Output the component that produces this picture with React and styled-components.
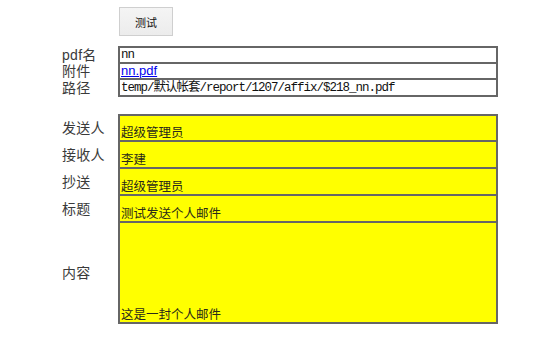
import React from "react";
import styled, { createGlobalStyle } from "styled-components";

const Global = createGlobalStyle`
  html, body { margin: 0; padding: 0; background: #fff; }
  body { font-family: "Noto Sans CJK SC", "Liberation Sans", sans-serif; }
`;

const Page = styled.div`
  display: grid;
  grid-template-columns: 56px 380px;
  padding: 7px 0 0 62px;
  align-items: stretch;
`;

const Spacer = styled.div`
  grid-column: 1 / -1;
  height: ${(p) => p.$h}px;
`;

const Button = styled.button`
  grid-column: 2;
  justify-self: start;
  margin-left: 1px;
  width: 54px;
  height: 29px;
  border: 1px solid #cfcfcf;
  background: linear-gradient(#f4f4f4, #ececec);
  color: #111;
  font-family: "Noto Sans CJK SC", sans-serif;
  font-size: 11px;
  font-weight: 400;
  padding: 0;
`;

const Label = styled.div`
  grid-column: 1;
  display: flex;
  align-items: center;
  font-family: "Liberation Sans", "Noto Sans CJK SC", sans-serif;
  font-size: 14px;
  color: #3a3a3a;
  line-height: 1;
  letter-spacing: 0.3px;
  white-space: nowrap;
`;

const Cell = styled.div`
  grid-column: 2;
  box-sizing: border-box;
  height: ${(p) => p.$h}px;
  border-style: solid;
  border-color: #666;
  border-width: ${(p) => (p.$first ? 2 : 1)}px 2px ${(p) => (p.$last ? 2 : 1)}px 2px;
  background: ${(p) => (p.$yellow ? "#ffff00" : "#fff")};
  display: flex;
  align-items: ${(p) => (p.$yellow ? "flex-end" : "center")};
  padding-left: 1px;
  overflow: hidden;
  white-space: nowrap;
`;

const MonoText = styled.span`
  font-family: "Liberation Mono", "Noto Sans CJK SC", monospace;
  font-size: 12.5px;
  letter-spacing: -1px;
  color: #111;
  line-height: 14px;
`;

const LinkText = styled.a`
  font-family: "Liberation Sans", sans-serif;
  font-size: 13px;
  color: #0000ee;
  text-decoration: underline;
  line-height: 14px;
`;

const CjkText = styled.span`
  font-family: "Noto Sans CJK SC", sans-serif;
  font-size: 12.5px;
  color: #2a2a1a;
  line-height: 16px;
`;

const infoRows = [
  { label: "pdf名", h: 17, node: <MonoText>nn</MonoText> },
  { label: "附件", h: 16, node: <LinkText href="#">nn.pdf</LinkText> },
  {
    label: "路径",
    h: 18,
    node: <MonoText>temp/默认帐套/report/1207/affix/$218_nn.pdf</MonoText>,
  },
];

const mailRows = [
  { label: "发送人", h: 27, text: "超级管理员" },
  { label: "接收人", h: 27, text: "李建" },
  { label: "抄送", h: 27, text: "超级管理员" },
  { label: "标题", h: 27, text: "测试发送个人邮件" },
  { label: "内容", h: 102, text: "这是一封个人邮件" },
];

export default function App() {
  return (
    <>
      <Global />
      <Page>
        <Button>测试</Button>
        <Spacer $h={10} />
        {infoRows.map((r, i) => (
          <React.Fragment key={r.label}>
            <Label>{r.label}</Label>
            <Cell $h={r.h} $first={i === 0} $last={i === infoRows.length - 1}>
              {r.node}
            </Cell>
          </React.Fragment>
        ))}
        <Spacer $h={17} />
        {mailRows.map((r, i) => (
          <React.Fragment key={r.label}>
            <Label>{r.label}</Label>
            <Cell
              $yellow
              $h={r.h}
              $first={i === 0}
              $last={i === mailRows.length - 1}
            >
              <CjkText>{r.text}</CjkText>
            </Cell>
          </React.Fragment>
        ))}
      </Page>
    </>
  );
}
